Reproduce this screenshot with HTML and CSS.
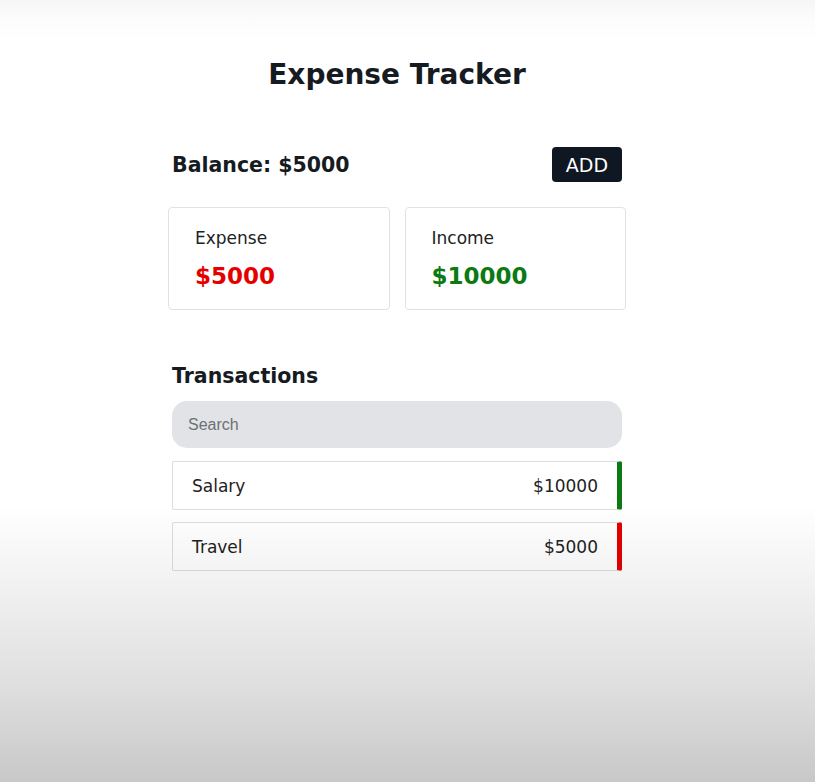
FILE: index.html
```html
<!DOCTYPE html>
<html lang="en">
<head>
<meta charset="utf-8">
<title>Expense Tracker</title>
<link rel="stylesheet" href="styles.css">
</head>
<body>
<div class="page">
  <main class="app">
    <h1 class="title">Expense Tracker</h1>
    <div class="balance-row">
      <div class="balance">Balance: $5000</div>
      <button class="add-btn">ADD</button>
    </div>
    <div class="cards">
      <div class="card">
        <div class="card-label">Expense</div>
        <div class="card-value expense">$5000</div>
      </div>
      <div class="card">
        <div class="card-label">Income</div>
        <div class="card-value income">$10000</div>
      </div>
    </div>
    <h2 class="section-title">Transactions</h2>
    <input class="search" type="text" placeholder="Search">
    <ul class="list">
      <li class="item item-income"><span>Salary</span><span>$10000</span></li>
      <li class="item item-expense"><span>Travel</span><span>$5000</span></li>
    </ul>
  </main>
</div>
</body>
</html>
```

FILE: styles.css
```css
html, body {
  margin: 0;
  padding: 0;
  min-height: 100%;
  background: #ffffff;
}
body {
  font-family: "DejaVu Sans", "Open Sans", sans-serif;
  color: #161b22;
  min-height: 782px;
  background: linear-gradient(to bottom, #f6f6f6 0px, #fcfcfc 20px, #ffffff 40px, #ffffff 100%);
}
body::after {
  content: "";
  position: fixed;
  left: 0;
  right: 0;
  top: 0;
  bottom: 0;
  pointer-events: none;
  background: linear-gradient(to bottom, rgba(0,0,0,0) 0px, rgba(0,0,0,0) 505px, rgba(0,0,0,0.05) 580px, rgba(0,0,0,0.12) 680px, rgba(0,0,0,0.215) 782px);
}
.page {
  display: flex;
  justify-content: center;
  padding-right: 21px;
}
.app {
  width: 450px;
  padding-top: 55px;
}
.title {
  margin: 0;
  text-align: center;
  font-size: 28px;
  line-height: 40px;
  font-weight: 700;
}
.balance-row {
  display: flex;
  justify-content: space-between;
  align-items: center;
  margin-top: 52px;
  height: 35px;
}
.balance {
  font-size: 20.5px;
  font-weight: 700;
}
.add-btn {
  width: 70px;
  height: 35px;
  border: none;
  border-radius: 4px;
  background: #0f1722;
  color: #ffffff;
  font-family: inherit;
  font-size: 19px;
  font-weight: 400;
  padding: 0;
}
.cards {
  display: flex;
  gap: 15px;
  margin: 25px -4px 0;
}
.card {
  flex: 1;
  height: 103px;
  box-sizing: border-box;
  border: 1px solid #e2e2e2;
  border-radius: 4px;
  background: #ffffff;
  padding: 19px 26px 0;
}
.card-label {
  font-size: 17px;
  line-height: 22px;
  color: #222;
}
.card-value {
  margin-top: 12px;
  font-size: 23px;
  line-height: 30px;
  font-weight: 700;
}
.expense { color: #e50000; }
.income { color: #0b7a12; }
.section-title {
  margin: 51px 0 0;
  font-size: 20.5px;
  line-height: 30px;
  font-weight: 700;
}
.search {
  display: block;
  box-sizing: border-box;
  width: 100%;
  height: 47px;
  margin-top: 10px;
  border: none;
  border-radius: 15px;
  background: #e1e3e6;
  padding: 0 16px;
  font-family: "Liberation Sans", Arial, sans-serif;
  font-size: 16px;
  color: #333;
  outline: none;
}
.search::placeholder {
  color: #6d7074;
}
.list {
  list-style: none;
  margin: 13px 0 0;
  padding: 0;
  display: flex;
  flex-direction: column;
  gap: 12px;
}
.item {
  display: flex;
  justify-content: space-between;
  align-items: center;
  box-sizing: border-box;
  height: 49px;
  border: 1px solid #dedede;
  border-right: 5px solid;
  border-radius: 2px;
  background: #ffffff;
  padding: 0 19px 0 19px;
  font-size: 17px;
  color: #222;
}
.item-income { border-right-color: #0b7a12; }
.item-expense { border-right-color: #e50000; }
```
